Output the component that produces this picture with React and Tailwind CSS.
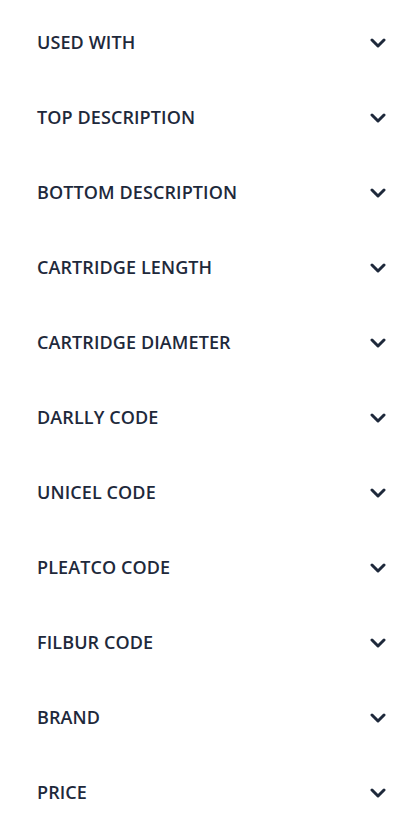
export default function App() {
  const items = [
    "USED WITH",
    "TOP DESCRIPTION",
    "BOTTOM DESCRIPTION",
    "CARTRIDGE LENGTH",
    "CARTRIDGE DIAMETER",
    "DARLLY CODE",
    "UNICEL CODE",
    "PLEATCO CODE",
    "FILBUR CODE",
    "BRAND",
    "PRICE",
  ];
  return (
    <div className="w-[410px] bg-white pt-[5px] pl-[37px] pr-[24px]" style={{ fontFamily: '"Open Sans", sans-serif' }}>
      {items.map((t) => (
        <div key={t} className="flex h-[75px] items-center justify-between">
          <span className="text-[18px] font-semibold text-[#1e293b] tracking-[0.1px]">{t}</span>
          <svg width="16" height="10" viewBox="0 0 16 10" className="text-[#1e293b]">
            <path d="M2 2 L8 8 L14 2" fill="none" stroke="currentColor" strokeWidth="3" strokeLinecap="round" strokeLinejoin="round" />
          </svg>
        </div>
      ))}
    </div>
  );
}
